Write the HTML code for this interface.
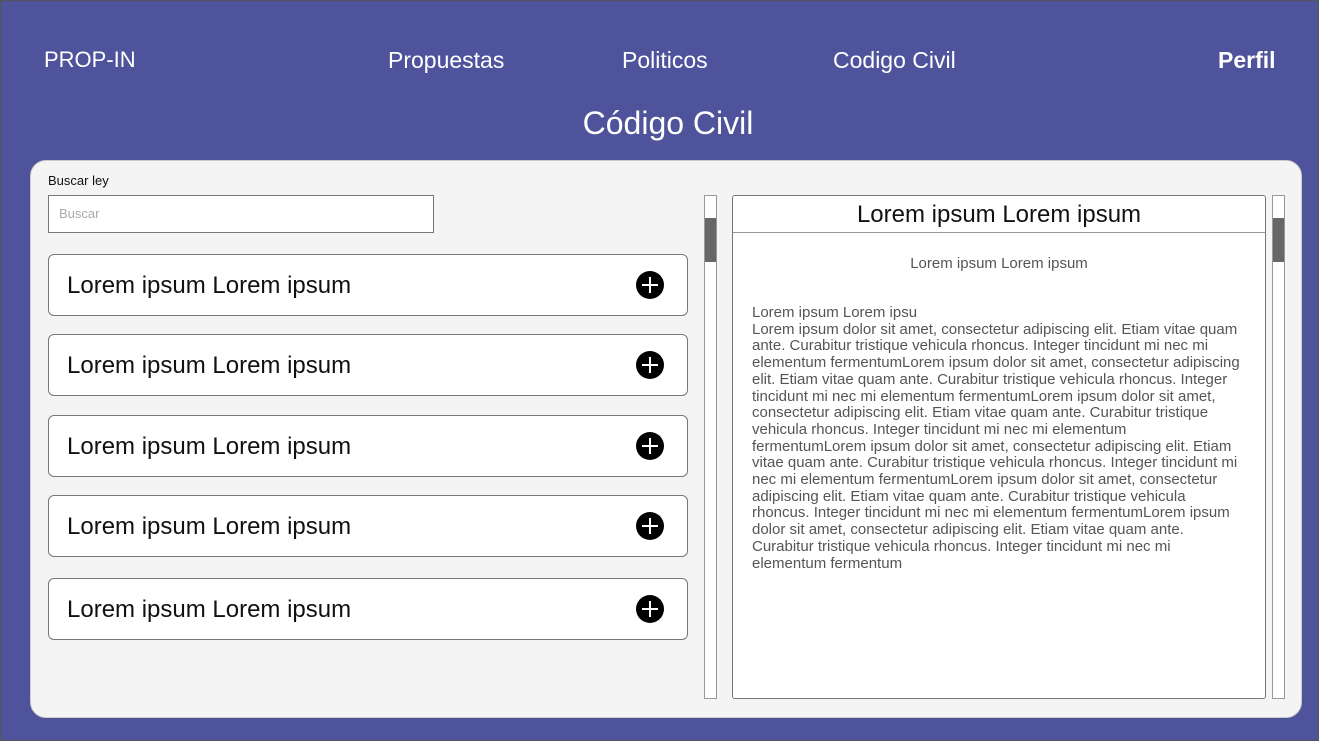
<!DOCTYPE html>
<html><head><meta charset="utf-8"><style>
*{box-sizing:border-box;margin:0;padding:0}
body{width:1319px;height:741px;background:#4e539b;font-family:"Liberation Sans",Arial,sans-serif;position:relative;overflow:hidden;box-shadow:inset 0 0 0 1px #555}
.nav{position:absolute;top:47px;color:#fff;font-size:23px}
.panel{position:absolute;left:30px;top:160px;width:1272px;height:558px;background:#f4f4f4;border-radius:16px;border:1px solid #ccc}
.item{position:absolute;left:48px;width:640px;height:62px;background:#fff;border:1px solid #777;border-radius:6px}
.item span{position:absolute;left:18px;top:17px;font-size:24px;color:#111}
.plus{position:absolute;left:587px;top:16px;width:28px;height:28px;border-radius:50%;background:#000}
.plus:before{content:"";position:absolute;left:6px;top:13px;width:16px;height:2px;background:#fff}
.plus:after{content:"";position:absolute;left:13px;top:6px;width:2px;height:16px;background:#fff}
.sb{position:absolute;top:195px;width:13px;height:504px;background:#fff;border:1px solid #999}
.sb div{position:absolute;left:0;top:22px;width:11px;height:44px;background:#666}
</style></head><body>
<div class="nav" style="left:44px;font-size:22px">PROP-IN</div>
<div class="nav" style="left:388px">Propuestas</div>
<div class="nav" style="left:622px">Politicos</div>
<div class="nav" style="left:833px">Codigo Civil</div>
<div class="nav" style="left:1218px;font-weight:bold">Perfil</div>
<div class="nav" style="left:0;width:1336px;text-align:center;top:105px;font-size:32px">Código Civil</div>
<div class="panel"></div>
<div style="position:absolute;left:48px;top:173px;font-size:13px;color:#111">Buscar ley</div>
<div style="position:absolute;left:48px;top:195px;width:386px;height:38px;background:#fff;border:1px solid #777;font-size:13px;color:#aaa;padding:10px 10px">Buscar</div>
<div class="item" style="top:254px"><span>Lorem ipsum Lorem ipsum</span><div class="plus"></div></div>
<div class="item" style="top:334px"><span>Lorem ipsum Lorem ipsum</span><div class="plus"></div></div>
<div class="item" style="top:415px"><span>Lorem ipsum Lorem ipsum</span><div class="plus"></div></div>
<div class="item" style="top:495px"><span>Lorem ipsum Lorem ipsum</span><div class="plus"></div></div>
<div class="item" style="top:578px"><span>Lorem ipsum Lorem ipsum</span><div class="plus"></div></div>
<div class="sb" style="left:704px"><div></div></div>
<div class="sb" style="left:1272px"><div></div></div>
<div style="position:absolute;left:732px;top:195px;width:534px;height:504px;background:#fff;border:1px solid #777;border-radius:3px">
<div style="height:37px;border-bottom:1px solid #999;text-align:center;font-size:24px;line-height:37px;color:#111">Lorem ipsum Lorem ipsum</div>
<div style="text-align:center;font-size:15px;color:#555;margin-top:22px">Lorem ipsum Lorem ipsum</div>
<div style="position:absolute;left:19px;top:109px;font-size:15px;line-height:16.7px;color:#555;white-space:nowrap">Lorem ipsum Lorem ipsu<br>Lorem ipsum dolor sit amet, consectetur adipiscing elit. Etiam vitae quam<br>ante. Curabitur tristique vehicula rhoncus. Integer tincidunt mi nec mi<br>elementum fermentumLorem ipsum dolor sit amet, consectetur adipiscing<br>elit. Etiam vitae quam ante. Curabitur tristique vehicula rhoncus. Integer<br>tincidunt mi nec mi elementum fermentumLorem ipsum dolor sit amet,<br>consectetur adipiscing elit. Etiam vitae quam ante. Curabitur tristique<br>vehicula rhoncus. Integer tincidunt mi nec mi elementum<br>fermentumLorem ipsum dolor sit amet, consectetur adipiscing elit. Etiam<br>vitae quam ante. Curabitur tristique vehicula rhoncus. Integer tincidunt mi<br>nec mi elementum fermentumLorem ipsum dolor sit amet, consectetur<br>adipiscing elit. Etiam vitae quam ante. Curabitur tristique vehicula<br>rhoncus. Integer tincidunt mi nec mi elementum fermentumLorem ipsum<br>dolor sit amet, consectetur adipiscing elit. Etiam vitae quam ante.<br>Curabitur tristique vehicula rhoncus. Integer tincidunt mi nec mi<br>elementum fermentum</div>
</div>
</body></html>
